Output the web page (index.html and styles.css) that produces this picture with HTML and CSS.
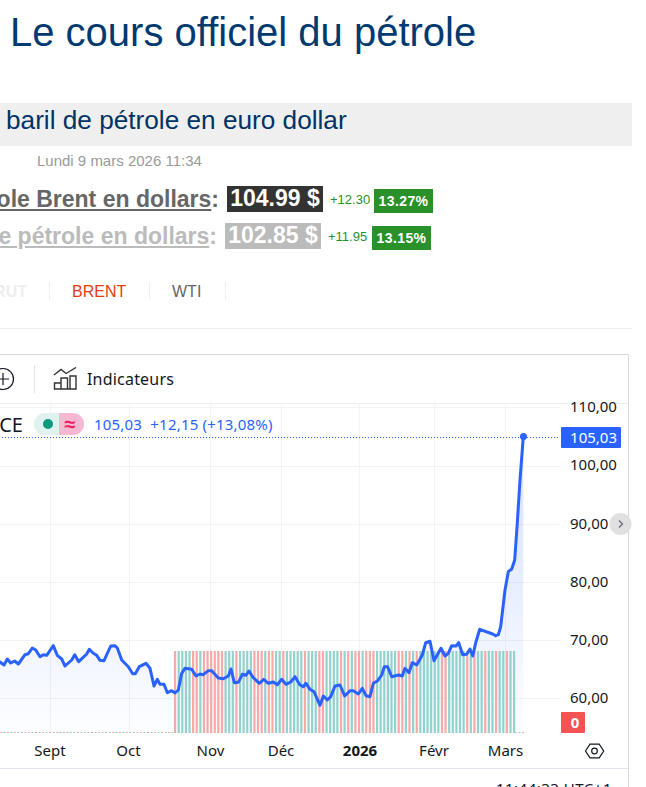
FILE: index.html
```html
<!DOCTYPE html>
<html lang="fr">
<head>
  <meta charset="UTF-8">
  <meta name="viewport" content="width=device-width, initial-scale=1.0">
  <title>Le cours officiel du pétrole</title>
  <link rel="stylesheet" href="styles.css">
</head>
<body>
  <h1 class="page-title">Le cours officiel du pétrole</h1>
  <h2 class="sub-title">baril de pétrole en euro dollar</h2>
  <p class="date">Lundi 9 mars 2026 11:34</p>

  <div class="quote brent">
    <div class="quote-label"><span><a href="#">Le prix du pétrole Brent en dollars</a>:</span></div>
    <span class="quote-price">104.99 $</span>
    <span class="quote-change">+12.30</span>
    <span class="quote-pct">13.27%</span>
  </div>
  <div class="quote wti">
    <div class="quote-label"><span><a href="#">Le prix WTI de pétrole en dollars</a>:</span></div>
    <span class="quote-price">102.85 $</span>
    <span class="quote-change">+11.95</span>
    <span class="quote-pct">13.15%</span>
  </div>

  <div class="tabs">
    <a href="#" class="tab tab-brut">BRUT</a>
    <a href="#" class="tab tab-brent">BRENT</a>
    <a href="#" class="tab tab-wti">WTI</a>
  </div>

  <div class="widget">
    <div class="toolbar">
      <svg class="icon-plus" width="24" height="24" viewBox="0 0 24 24" fill="none" stroke="#131722" stroke-width="1.2">
        <circle cx="12" cy="12" r="10.5"/>
        <path d="M12 6v12M6 12h12"/>
      </svg>
      <span class="toolbar-sep"></span>
      <svg class="icon-indic" width="24" height="24" viewBox="0 0 24 24" fill="none" stroke="#333" stroke-width="1.4">
        <path d="M1 8 8 2.500l5 4 10-6"/>
        <path d="M1.500 22v-6h6.500v6zM8 22V11h6.500v11zM17 22V9h6v13zM14.500 22H17"/>
      </svg>
      <span class="toolbar-label">Indicateurs</span>
    </div>

    <div class="chart">
      <svg class="chart-svg" width="638" height="383" viewBox="-9 404 638 383">
        <defs>
          <linearGradient id="areaFill" gradientUnits="userSpaceOnUse" x1="0" y1="437" x2="0" y2="733">
            <stop offset="0" stop-color="#2962ff" stop-opacity="0.2"/>
            <stop offset="1" stop-color="#2962ff" stop-opacity="0.01"/>
          </linearGradient>
        </defs>

        <g stroke="#f2f3f5" stroke-width="1">
          <path d="M-10 407.500H560M-10 466.500H560M-10 524.500H560M-10 582.500H560M-10 640.500H560M-10 698.500H560"/>
          <path d="M50.500 404V733M129.500 404V733M210.500 404V733M281.500 404V733M359.500 404V733M434.500 404V733M505.500 404V733"/>
        </g>

        <path id="area" fill="url(#areaFill)"/>
        <g id="bars"></g>
        <path class="dots-red" d="M0 732.500H174M515 732.500H524"/>
        <path class="dots-teal" d="M0 732.500H174M515 732.500H524"/>
        <path class="last-line" d="M-10 437.500H560"/>
        <path id="line" class="price-line"/>
        <circle cx="523.500" cy="436.500" r="3.500" fill="#2962ff"/>

        <g class="axis-y">
          <text x="570" y="412">110,00</text>
          <text x="570" y="470">100,00</text>
          <text x="570" y="528.500">90,00</text>
          <text x="570" y="586.500">80,00</text>
          <text x="570" y="645">70,00</text>
          <text x="570" y="703">60,00</text>
        </g>

        <rect x="561" y="427" width="60" height="21" rx="1" fill="#2962ff"/>
        <text class="tag-text" x="617" y="443">105,03</text>
        <rect x="561" y="712" width="24" height="21" rx="1" fill="#f35353"/>
        <text class="tag-text tag-zero" x="575" y="728">0</text>

        <circle cx="620.500" cy="524" r="11" fill="#e0e0e0"/>
        <path d="M619 520.500l3.500 3.500-3.500 3.500" fill="none" stroke="#6a6d78" stroke-width="1.300"/>

        <g class="axis-x">
          <text x="50" y="756">Sept</text>
          <text x="128.500" y="756">Oct</text>
          <text x="210.500" y="756">Nov</text>
          <text x="281" y="756">Déc</text>
          <text class="axis-year" x="360" y="756">2026</text>
          <text x="434" y="756">Févr</text>
          <text x="505.500" y="756">Mars</text>
        </g>
        <path d="M585.500 751l4.500-6.800h9.200l4.500 6.800-4.500 6.800H590z" fill="none" stroke="#131722" stroke-width="1.200"/>
        <circle cx="594.500" cy="751" r="2.800" fill="none" stroke="#131722" stroke-width="1.200"/>

        <path d="M-10 768.500H628" stroke="#e0e3eb"/>
        <text class="clock" x="612" y="794">11:44:33 UTC+1</text>
      </svg>

      <div class="legend">
        <span class="legend-name">ICE</span>
        <span class="legend-pill">
          <span class="pill-dot"><i></i></span>
          <span class="pill-wave">≈</span>
        </span>
        <span class="legend-values">105,03&nbsp; +12,15 (+13,08%)</span>
      </div>
    </div>
  </div>

  <script src="chart.js"></script>
</body>
</html>
```

FILE: styles.css
```css
* { box-sizing: border-box; }
html, body {
  height: 787px;
  overflow: hidden;
}
body {
  margin: 0;
  font-family: "Liberation Sans", Arial, sans-serif;
  background: #fff;
  color: #333;
}
.page-title {
  margin: 0;
  padding: 10px 0 0 10px;
  height: 103px;
  font-size: 40px;
  line-height: 44px;
  font-weight: normal;
  color: #003a70;
}
.sub-title {
  margin: 0;
  width: 632px;
  height: 43px;
  padding-left: 6px;
  background: #efefef;
  font-size: 26.2px;
  line-height: 35px;
  font-weight: normal;
  color: #003366;
}
.date {
  margin: 0;
  padding: 6px 0 0 37px;
  height: 40px;
  font-size: 15px;
  line-height: 17px;
  color: #999;
}

/* ligne de cours */
.quote {
  display: flex;
  align-items: center;
  height: 26px;
  margin-bottom: 11px;
  white-space: nowrap;
}
.quote-label {
  display: flex;
  justify-content: flex-end;
  flex: none;
  padding-right: 8px;
  font-size: 23px;
  font-weight: bold;
}
.quote-label a { color: inherit; }
.quote-price {
  height: 26px;
  width: 96px;
  text-align: center;
  font-size: 23px;
  line-height: 25px;
  font-weight: bold;
  color: #fff;
}
.quote-change {
  margin-left: 7px;
  width: 44px;
  font-size: 13px;
  color: #2a8f2a;
}
.quote-pct {
  height: 24px;
  width: 59px;
  margin-top: 3px;
  text-align: center;
  background: #2a912a;
  color: #fff;
  font-size: 14px;
  line-height: 25px;
  font-weight: bold;
  letter-spacing: 0.4px;
}
.brent { color: #666; }
.brent .quote-label { width: 227px; }
.brent .quote-price { background: #333; }
.wti { color: #bbb; }
.wti .quote-label { width: 225px; }
.wti .quote-price { background: #bbb; }

/* onglets */
.tabs {
  display: flex;
  width: 632px;
  height: 47px;
  margin-top: 33px;
  border-bottom: 1px solid #eee;
}
.tab {
  height: 18px;
  font-size: 16px;
  line-height: 20px;
  text-decoration: none;
  border-right: 1px solid #eee;
}
.tab-brut {
  width: 50px;
  padding-right: 22px;
  text-align: right;
  direction: rtl;
  font-weight: bold;
  color: #eee;
}
.tab-brent {
  width: 100px;
  padding-left: 22px;
  color: #e63c0a;
}
.tab-wti {
  width: 76px;
  padding-left: 22px;
  color: #666;
}

/* widget graphique */
.widget {
  width: 639px;
  height: 440px;
  margin: 25px 0 0 -10px;
  border: 1px solid #d9d9d9;
  border-bottom: 0;
  font-family: "Noto Sans", sans-serif;
  color: #131722;
}
.toolbar {
  position: relative;
  display: flex;
  align-items: center;
  height: 49px;
  background: #fff;
  border-bottom: 1px solid #eceef2;
}
.toolbar-sep {
  width: 1px;
  height: 28px;
  margin: 0 18px 0 19px;
  background: #e0e3eb;
}
.toolbar-label {
  margin-left: 10px;
  font-size: 16px;
  letter-spacing: 0.2px;
}
.chart {
  position: relative;
}
.chart-svg {
  display: block;
  overflow: visible;
}
.chart-svg text {
  font-family: "Noto Sans", sans-serif;
  font-size: 15px;
  fill: #131722;
}
.price-line {
  fill: none;
  stroke: #2962ff;
  stroke-width: 3;
  stroke-linejoin: round;
}
.last-line {
  stroke: #2962ff;
  stroke-dasharray: 1 2;
  fill: none;
}
.dots-red {
  stroke: #f7a9a7;
  stroke-dasharray: 2 5;
}
.dots-teal {
  stroke: #92d2cc;
  stroke-dasharray: 2 5;
  stroke-dashoffset: 3.5;
}
.axis-x text { text-anchor: middle; }
.chart-svg .axis-year { font-weight: bold; }
.chart-svg .tag-text {
  fill: #fff;
  text-anchor: end;
}
.chart-svg .tag-zero { text-anchor: middle; font-weight: bold; }
.chart-svg .clock {
  text-anchor: end;
  letter-spacing: 0.5px;
}

.legend {
  position: absolute;
  top: 9px;
  left: 0;
  display: flex;
  align-items: center;
  height: 22px;
}
.legend-name {
  width: 32px;
  text-align: right;
  direction: rtl;
  white-space: nowrap;
  overflow: visible;
  font-size: 20px;
}
.legend-pill {
  display: flex;
  width: 50px;
  height: 22px;
  margin-left: 11px;
  border-radius: 11px;
  overflow: hidden;
}
.pill-dot {
  display: flex;
  align-items: center;
  justify-content: center;
  width: 25px;
  padding-left: 3px;
  background: #dff2ef;
}
.pill-dot i {
  width: 10px;
  height: 10px;
  border-radius: 50%;
  background: #089981;
}
.pill-wave {
  width: 25px;
  padding-right: 3px;
  text-align: center;
  background: #f5b8d0;
  color: #e91e63;
  font-size: 20px;
  line-height: 21px;
  font-weight: bold;
}
.legend-values {
  margin-left: 10px;
  font-size: 15px;
  letter-spacing: 0.2px;
  color: #2962ff;
  white-space: nowrap;
}
```

FILE: chart.js
```js
const points = [
  [-10,660],[0,662],[4,665],[7.3,659],[10.7,663],[14.7,661],[18.3,664],[25,654.7],[28.3,653.7],[32.3,648],
  [35.7,650],[40,656.7],[43.3,654.7],[46.7,655.3],[53.3,645.7],[57.3,655.3],[61.7,659],[65,666],[71.7,660],
  [74.7,654.7],[78.7,661.7],[86.7,654],[89.3,649.3],[93.3,653.3],[96.7,655.3],[100,660.3],[104,660.7],
  [110.7,646],[115,645.7],[117.3,648],[121.7,660],[128.3,666.7],[132.7,673.7],[135.3,673.7],[139.3,666.7],
  [146,663.3],[150,668.3],[154,686],[157.3,679.3],[160,684.3],[164,684.3],[167.3,692.7],[171.7,690.7],
  [175,693],[178.3,690],[181.7,673.3],[185,668.3],[191.7,669.3],[196,676],[200,674],[203.3,674.7],
  [208.3,670.7],[211.7,670.7],[218.3,678],[223.3,678.7],[228.3,676],[231,669],[234.3,682.7],[238.3,682.3],
  [242.3,674.3],[245.7,675.3],[249,671],[253.3,677.7],[259.3,683.3],[263.7,679.3],[268.3,683.3],[273.3,682],
  [277.3,684.7],[281.7,679.3],[286,684.3],[290.7,682],[295,676.7],[300,685],[303.3,686.7],[306,683.3],
  [310,689.3],[314,691.7],[320,705.3],[323.3,696],[327.3,700],[330.7,696.7],[335,686],[340,685],
  [344.7,696],[350,690.7],[353.3,690.7],[358.3,694],[362.3,688.3],[366,695.7],[370,696.7],[373.3,683.3],
  [377.7,680.7],[381.7,675],[384.3,666.7],[387.7,666.7],[391.7,676.7],[398.3,675],[402.3,676],[405,668.3],
  [409,672.7],[412.3,662.7],[416.7,665],[422.3,655],[425.7,642.7],[430,641.3],[434,660.7],[441,648.3],
  [445,656],[448.3,653.3],[451.7,645.7],[456,646],[458.7,642.7],[462.7,654.7],[466.7,654.3],[470,649],
  [472.7,656],[476,641.7],[479.7,629.3],[492.7,634],[495.7,635.7],[498.3,634.7],[500.7,626.7],[505,590],
  [508.3,571.7],[511.7,569],[514.7,560],[517.3,523],[520,480],[523.3,436.7]
];

const linePath = 'M' + points.map(p => p.join(' ')).join('L');
document.getElementById('line').setAttribute('d', linePath);
document.getElementById('area').setAttribute('d', linePath + 'L523.3 733L-10 733Z');

// r = baisse, t = hausse
const volumes = 'rttttrrtrrrrrrtttrttttrrrtrrttrtttttrtttrrttttrtrtrrtrrrttttttrrtrtrttttttrrtttttrtrttrttrttrtt';
const svgNS = 'http://www.w3.org/2000/svg';
const bars = document.getElementById('bars');
const step = 339 / (volumes.length - 1);

volumes.split('').forEach((v, i) => {
  const rect = document.createElementNS(svgNS, 'rect');
  rect.setAttribute('x', 174 + i * step);
  rect.setAttribute('y', 651);
  rect.setAttribute('width', 2.2);
  rect.setAttribute('height', 82);
  rect.setAttribute('fill', v === 'r' ? '#f7a9a7' : '#92d2cc');
  bars.appendChild(rect);
});
```
